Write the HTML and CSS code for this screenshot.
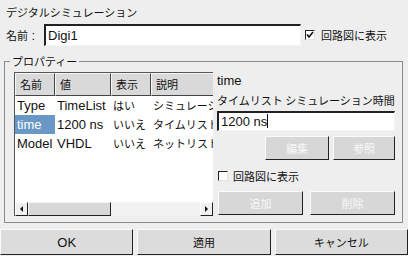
FILE: index.html
```html
<!DOCTYPE html>
<html lang="ja">
<head>
<meta charset="utf-8">
<title>デジタルシミュレーション</title>
<link rel="stylesheet" href="styles.css">
</head>
<body>
<div class="title j">デジタルシミュレーション</div>
<div class="name-row">
  <span class="name-label"><span class="j">名前</span> :</span>
  <div class="field name-field">Digi1</div>
  <span class="cb cb-top"><svg width="8" height="8" viewBox="0 0 8 8"><path d="M1 3.5 L3 6 L7 1" fill="none" stroke="#111" stroke-width="1.6"/></svg></span>
  <span class="j cb-label">回路図に表示</span>
</div>
<fieldset class="props">
  <legend class="j">プロパティー</legend>
  <div class="props-body">
    <div class="table-box">
      <div class="thead">
        <div class="th j">名前</div>
        <div class="th j">値</div>
        <div class="th j">表示</div>
        <div class="th j">説明</div>
      </div>
      <div class="tbody">
        <div class="tr">
          <div class="td">Type</div>
          <div class="td">TimeList</div>
          <div class="td j">はい</div>
          <div class="td j">シミュレーション種別</div>
        </div>
        <div class="tr">
          <div class="td sel">time</div>
          <div class="td">1200 ns</div>
          <div class="td j">いいえ</div>
          <div class="td j">タイムリスト シミュレーション時間</div>
        </div>
        <div class="tr">
          <div class="td">Model</div>
          <div class="td">VHDL</div>
          <div class="td j">いいえ</div>
          <div class="td j">ネットリスト形式</div>
        </div>
      </div>
      <div class="hscroll">
        <div class="arrow-btn"><span class="tri-left"></span></div>
        <div class="thumb"></div>
        <div class="track"></div>
        <div class="arrow-btn"><span class="tri-right"></span></div>
      </div>
    </div>
    <div class="detail">
      <div class="d-name">time</div>
      <div class="d-desc j">タイムリスト シミュレーション時間</div>
      <div class="field d-field">1200 ns<span class="caret"></span></div>
      <div class="btn-row1">
        <div class="btn disabled j w64">編集</div>
        <div class="btn disabled j w62">参照</div>
      </div>
      <div class="check-row">
        <span class="cb"></span>
        <span class="j cb-label">回路図に表示</span>
      </div>
      <div class="btn-row2">
        <div class="btn disabled j w85">追加</div>
        <div class="btn disabled j w85">削除</div>
      </div>
    </div>
  </div>
</fieldset>
<div class="actions">
  <div class="btn">OK</div>
  <div class="btn j">適用</div>
  <div class="btn j">キャンセル</div>
</div>
</body>
</html>
```

FILE: styles.css
```css
* { box-sizing: border-box; }
body {
  margin: 0;
  width: 408px;
  height: 256px;
  overflow: hidden;
  background: #eeeeee;
  color: #111;
  font-family: "Liberation Sans", "Noto Sans CJK JP", sans-serif;
  font-size: 13px;
}
.j { font-family: "Noto Sans CJK JP", sans-serif; font-size: 11px; }

.title { height: 24px; line-height: 24px; padding-left: 6px; }

.name-row { display: flex; align-items: center; height: 22px; }
.name-label { width: 44px; padding-left: 6px; white-space: nowrap; }
.field {
  background: #fff;
  border-top: 2px solid #222;
  border-left: 2px solid #222;
  border-right: 1px solid #f4f4f4;
  border-bottom: 1px solid #f4f4f4;
  white-space: nowrap;
}
.name-field { width: 257px; height: 22px; line-height: 19px; padding-left: 2px; }
.cb {
  display: inline-flex;
  align-items: center;
  justify-content: center;
  width: 10px;
  height: 10px;
  background: #fff;
  border-top: 1px solid #222;
  border-left: 1px solid #222;
  border-right: 1px solid #e4e4e4;
  border-bottom: 1px solid #e4e4e4;
}
.cb-top { margin-left: 4px; }
.cb-label { margin-left: 6px; }

.props {
  margin: 8px 5px 0 4px;
  padding: 4px 6px 6px 9px;
  border: 1px solid #8a8a8a;
  min-width: 0;
}
.props legend { padding: 0 2px; margin-left: -4px; line-height: 14px; }
.props-body { display: flex; gap: 4px; height: 144px; }

.table-box {
  width: 199px;
  height: 144px;
  background: #fff;
  border-top: 1px solid #555;
  border-left: 1px solid #555;
  display: flex;
  flex-direction: column;
  overflow: hidden;
}
.thead, .tr {
  display: grid;
  grid-template-columns: 40px 56px 40px 62px;
  width: 198px;
}
.thead { height: 23px; }
.th {
  background: #d9d9d9;
  border-top: 1px solid #f6f6f6;
  border-left: 1px solid #f6f6f6;
  border-right: 1px solid #444;
  border-bottom: 1px solid #444;
  padding-left: 4px;
  line-height: 21px;
  white-space: nowrap;
  overflow: hidden;
}
.thead .th:last-child { border-right: none; }
.tr { height: 19px; }
.td {
  padding-left: 2px;
  line-height: 19px;
  white-space: nowrap;
  overflow: hidden;
}
.td.sel { background: #6a98c6; color: #fff; }

.hscroll {
  margin-top: auto;
  display: flex;
  height: 14px;
  width: 198px;
  background: #ececec;
}
.arrow-btn {
  width: 13px;
  height: 14px;
  background: #f0f0f0;
  border-right: 1px solid #222;
  border-bottom: 1px solid #222;
  border-top: 1px solid #fff;
  border-left: 1px solid #fff;
  display: flex;
  align-items: center;
  justify-content: center;
}
.tri-left {
  width: 0; height: 0;
  border-top: 3px solid transparent;
  border-bottom: 3px solid transparent;
  border-right: 3px solid #111;
}
.tri-right {
  width: 0; height: 0;
  border-top: 3px solid transparent;
  border-bottom: 3px solid transparent;
  border-left: 3px solid #111;
}
.thumb {
  width: 83px;
  height: 14px;
  background: #d8d8d8;
  border-top: 1px solid #f4f4f4;
  border-left: 1px solid #f4f4f4;
  border-right: 1px solid #222;
  border-bottom: 1px solid #222;
}
.track { flex: 1; background: #f2f2f2; }

.detail { width: 178px; display: flex; flex-direction: column; }
.d-name { height: 18px; line-height: 18px; }
.d-desc { height: 20px; line-height: 20px; margin-bottom: 1px; white-space: nowrap; }
.d-field { height: 20px; line-height: 17px; padding-left: 2px; }
.caret { display: inline-block; width: 1px; height: 14px; background: #111; vertical-align: -2px; }

.btn {
  display: flex;
  align-items: center;
  justify-content: center;
  background: #dcdcdc;
  border-top: 1px solid #fafafa;
  border-left: 1px solid #fafafa;
  border-right: 1px solid #222;
  border-bottom: 1px solid #222;
}
.btn.disabled { background: #d7d7d7; color: #f7f7f7; }
.btn-row1 { display: flex; justify-content: flex-end; gap: 4px; margin-top: 5px; height: 24px; }
.w64 { width: 64px; }
.w62 { width: 62px; }
.w85 { width: 85px; }
.check-row { display: flex; align-items: center; height: 26px; margin-top: 3px; padding-left: 1px; }
.check-row .cb-label { margin-left: 5px; }
.btn-row2 { display: flex; gap: 7px; margin-top: 2px; height: 24px; padding-left: 1px; }

.actions {
  display: grid;
  grid-template-columns: repeat(3, 1fr);
  gap: 4px;
  margin-top: 6px;
  height: 26px;
}
```
